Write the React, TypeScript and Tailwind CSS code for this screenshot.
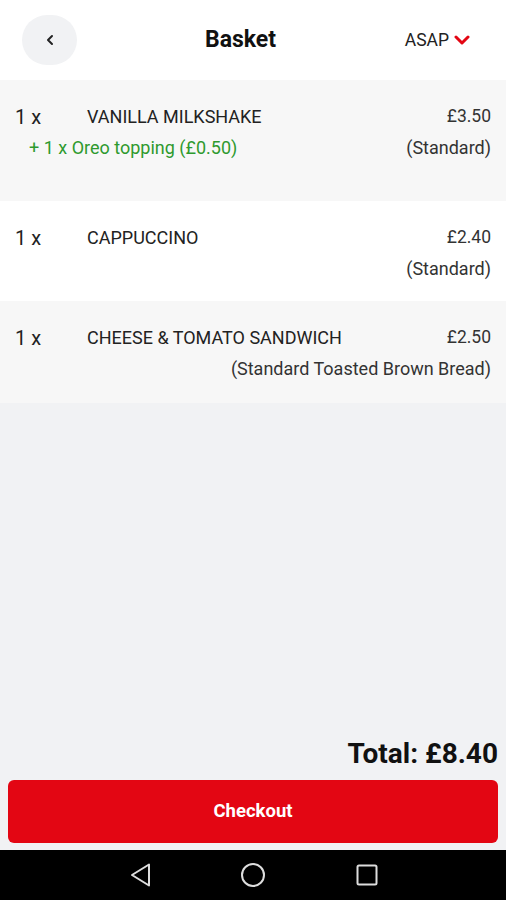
import React from "react";

const items = [
  {
    qty: "1 x",
    name: "VANILLA MILKSHAKE",
    price: "£3.50",
    extra: "+ 1 x Oreo topping (£0.50)",
    detail: "(Standard)",
    bg: "bg-[#f7f7f7]",
    h: "h-[121px]",
  },
  {
    qty: "1 x",
    name: "CAPPUCCINO",
    price: "£2.40",
    extra: "",
    detail: "(Standard)",
    bg: "bg-white",
    h: "h-[100px]",
  },
  {
    qty: "1 x",
    name: "CHEESE & TOMATO SANDWICH",
    price: "£2.50",
    extra: "",
    detail: "(Standard Toasted Brown Bread)",
    bg: "bg-[#f7f7f7]",
    h: "h-[102px]",
  },
];

export default function App() {
  return (
    <div className="w-[506px] h-[900px] flex flex-col bg-[#f1f2f4] font-['Roboto',sans-serif] text-[#222]">
      {/* Header */}
      <div className="h-[80px] bg-white flex items-center pl-[22px] pr-[36px] shrink-0">
        <div className="w-[55px] h-[50px] rounded-full bg-[#f1f2f4] flex items-center justify-center">
          <svg width="10" height="12" viewBox="0 0 10 12">
            <path d="M7 2 L3 6 L7 10" fill="none" stroke="#222" strokeWidth="2" strokeLinecap="round" strokeLinejoin="round" />
          </svg>
        </div>
        <div className="ml-[128px] text-[23px] font-bold text-[#111]">Basket</div>
        <div className="flex-1" />
        <div className="flex items-center gap-[5px]">
          <span className="text-[17.5px] text-[#222]">ASAP</span>
          <svg width="16" height="11" viewBox="0 0 16 11">
            <path d="M2 2 L8 8 L14 2" fill="none" stroke="#e30613" strokeWidth="3" strokeLinecap="round" strokeLinejoin="round" />
          </svg>
        </div>
      </div>

      {/* Items */}
      {items.map((it, i) => (
        <div key={i} className={`${it.bg} ${it.h} shrink-0 pt-[21px] pl-[15px] pr-[15px]`}>
          <div className="flex items-center h-[31px]">
            <div className="w-[72px] text-[20px] text-[#222]">{it.qty}</div>
            <div className="flex-1 text-[18px] text-[#222]">{it.name}</div>
            <div className="text-[17.5px] text-[#333]">{it.price}</div>
          </div>
          <div className="flex items-center h-[31px]">
            <div className="flex-1 pl-[14px] text-[18px] text-[#2e9a2e]">{it.extra}</div>
            <div className="text-[18px] text-[#333]">{it.detail}</div>
          </div>
        </div>
      ))}

      <div className="flex-1" />

      {/* Total */}
      <div className="flex justify-end pr-[8px] pb-[5px]">
        <span className="text-[28px] font-bold text-[#111]">Total: £8.40</span>
      </div>

      {/* Checkout */}
      <div className="px-[8px] pb-[7px]">
        <button className="w-full h-[63px] rounded-[6px] bg-[#e30613] text-white text-[18.5px] font-bold flex items-center justify-center">
          Checkout
        </button>
      </div>

      {/* Android nav */}
      <div className="h-[50px] bg-black shrink-0 flex items-center justify-center">
        <div className="flex items-center">
          <svg width="24" height="26" viewBox="0 0 24 26" className="mr-[87px]">
            <path d="M20 2.5 L20 23.5 L3 13 Z" fill="none" stroke="#ddd" strokeWidth="2" strokeLinejoin="round" />
          </svg>
          <svg width="26" height="26" viewBox="0 0 26 26" className="mr-[90px]">
            <circle cx="13" cy="13" r="11" fill="none" stroke="#ddd" strokeWidth="2" />
          </svg>
          <svg width="22" height="22" viewBox="0 0 22 22">
            <rect x="1.5" y="1.5" width="19" height="19" rx="1.5" fill="none" stroke="#ddd" strokeWidth="2" />
          </svg>
        </div>
      </div>
    </div>
  );
}
